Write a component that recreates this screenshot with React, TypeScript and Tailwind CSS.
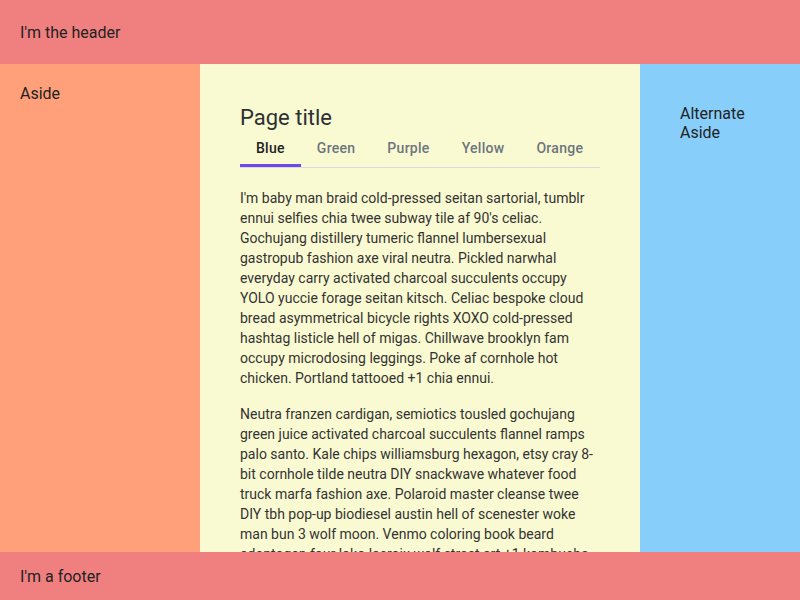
import { useState } from "react";

const tabs = ["Blue", "Green", "Purple", "Yellow", "Orange"];

export default function App() {
  const [active, setActive] = useState("Blue");

  return (
    <div className="flex flex-col h-[600px] overflow-hidden font-['Roboto',sans-serif] text-[#222]">
      <header className="h-16 shrink-0 bg-[#f08080] px-5 pt-[2px] flex items-center text-base">
        I'm the header
      </header>

      <div className="flex flex-1 min-h-0">
        <aside className="w-[200px] shrink-0 bg-[#ffa07a] p-5 text-base leading-[19px]">Aside</aside>

        <main className="flex-1 bg-[#fafad2] px-10 pt-10 overflow-hidden text-[#333]">
          <h1 className="text-[22px] leading-7 text-[#2d3033]">Page title</h1>
          <div className="mt-[1px] flex border-b border-[#d9dbe4]">
            {tabs.map((t) => (
              <button
                key={t}
                onClick={() => setActive(t)}
                className={`px-4 pt-[5px] pb-[6px] text-sm leading-5 font-medium tracking-[0.02em] border-b-[3px] ${
                  active === t ? "border-[#7048e8] text-[#222]" : "border-transparent text-[#6c757d]"
                }`}
              >
                {t}
              </button>
            ))}
          </div>

          <div className="mt-5 text-sm leading-5">
            <p className="mb-4">
              I'm baby man braid cold-pressed seitan sartorial, tumblr ennui selfies chia twee subway tile af 90's
              celiac. Gochujang distillery tumeric flannel lumbersexual gastropub fashion axe viral neutra. Pickled
              narwhal everyday carry activated charcoal succulents occupy YOLO yuccie forage seitan kitsch. Celiac
              bespoke cloud bread asymmetrical bicycle rights XOXO cold-pressed hashtag listicle hell of migas.
              Chillwave brooklyn fam occupy microdosing leggings. Poke af cornhole hot chicken. Portland tattooed +1
              chia ennui.
            </p>
            <p className="mb-4">
              Neutra franzen cardigan, semiotics tousled gochujang green juice activated charcoal succulents flannel
              ramps palo santo. Kale chips williamsburg hexagon, etsy cray 8-bit cornhole tilde neutra DIY snackwave
              whatever food truck marfa fashion axe. Polaroid master cleanse twee DIY tbh pop-up biodiesel austin hell
              of scenester woke man bun 3 wolf moon. Venmo coloring book beard adaptogen four loko lacroix wolf
              street art +1 kombucha.
            </p>
          </div>
        </main>

        <aside className="w-40 shrink-0 bg-[#87cefa] px-10 pt-10 text-base leading-[19px]">
          Alternate Aside
        </aside>
      </div>

      <footer className="h-12 shrink-0 bg-[#f08080] px-5 pt-[2px] flex items-center text-base">I'm a footer</footer>
    </div>
  );
}
